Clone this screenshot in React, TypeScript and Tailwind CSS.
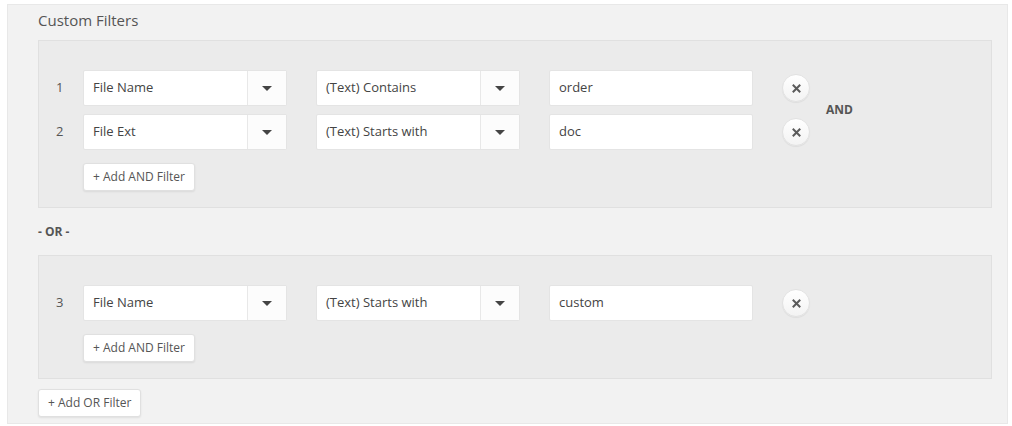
import React from "react";

type Row = { n: number; field: string; op: string; value: string };

const groups: Row[][] = [
  [
    { n: 1, field: "File Name", op: "(Text) Contains", value: "order" },
    { n: 2, field: "File Ext", op: "(Text) Starts with", value: "doc" },
  ],
  [{ n: 3, field: "File Name", op: "(Text) Starts with", value: "custom" }],
];

function Select({ label }: { label: string }) {
  return (
    <div className="flex h-[36px] w-[204px] rounded-[2px] border border-[#e4e4e4] bg-white">
      <div className="flex flex-1 items-center pl-[9px] text-[13px] text-[#444]">
        {label}
      </div>
      <div className="flex w-[39px] items-center justify-center border-l border-[#e8e8e8] bg-[#fcfcfc]">
        <svg width="10" height="5" viewBox="0 0 10 5">
          <polygon points="0,0 10,0 5,5" fill="#444" />
        </svg>
      </div>
    </div>
  );
}

function RemoveButton() {
  return (
    <button className="flex h-[28px] w-[28px] items-center justify-center rounded-full border border-[#e2e2e2] bg-gradient-to-b from-white to-[#f3f3f3] shadow-[0_1px_1px_rgba(0,0,0,0.06)]">
      <svg width="9" height="9" viewBox="0 0 9 9">
        <path
          d="M1.5 1.5 L7.5 7.5 M7.5 1.5 L1.5 7.5"
          stroke="#5a5a5a"
          strokeWidth="2"
          strokeLinecap="square"
        />
      </svg>
    </button>
  );
}

function SmallButton({ label }: { label: string }) {
  return (
    <button className="h-[28px] rounded-[3px] border border-[#e0e0e0] bg-white px-[9px] text-[12px] text-[#555] shadow-[0_1px_2px_rgba(0,0,0,0.08)]">
      {label}
    </button>
  );
}

function FilterRow({ row }: { row: Row }) {
  return (
    <div className="flex h-[36px] items-center">
      <div className="w-[44px] pl-[17px] text-[13px] text-[#555]">{row.n}</div>
      <Select label={row.field} />
      <div className="ml-[29px]">
        <Select label={row.op} />
      </div>
      <div className="ml-[29px] flex h-[36px] w-[204px] items-center rounded-[2px] border border-[#e4e4e4] bg-white pl-[9px] text-[13px] text-[#444]">
        {row.value}
      </div>
      <div className="ml-[29px]">
        <RemoveButton />
      </div>
    </div>
  );
}

function Group({ rows }: { rows: Row[] }) {
  return (
    <div className="border border-[#e0e0e0] bg-[#ebebeb] pt-[29px] pb-[16px]">
      <div className="flex items-center">
        <div className="flex flex-col gap-[8px]">
          {rows.map((r) => (
            <FilterRow key={r.n} row={r} />
          ))}
        </div>
        {rows.length > 1 && (
          <div className="ml-[16px] text-[12px] font-bold text-[#555]">AND</div>
        )}
      </div>
      <div className="mt-[13px] pl-[44px]">
        <SmallButton label="+ Add AND Filter" />
      </div>
    </div>
  );
}

export default function App() {
  return (
    <div
      className="h-[426px] w-full bg-white pt-[4px] pl-[7px]"
      style={{ fontFamily: '"Open Sans", sans-serif' }}
    >
      <div className="h-[420px] w-[1001px] border border-[#e8e8e8] bg-[#f2f2f2] pt-[5px] pr-[15px] pl-[30px]">
        <div className="mb-[10px] h-[20px] text-[15px] leading-[20px] text-[#555]">
          Custom Filters
        </div>
        <Group rows={groups[0]} />
        <div className="mt-[16px] mb-[15px] h-[16px] text-[12px] leading-[16px] font-bold text-[#555]">
          - OR -
        </div>
        <Group rows={groups[1]} />
        <div className="mt-[10px]">
          <SmallButton label="+ Add OR Filter" />
        </div>
      </div>
    </div>
  );
}
